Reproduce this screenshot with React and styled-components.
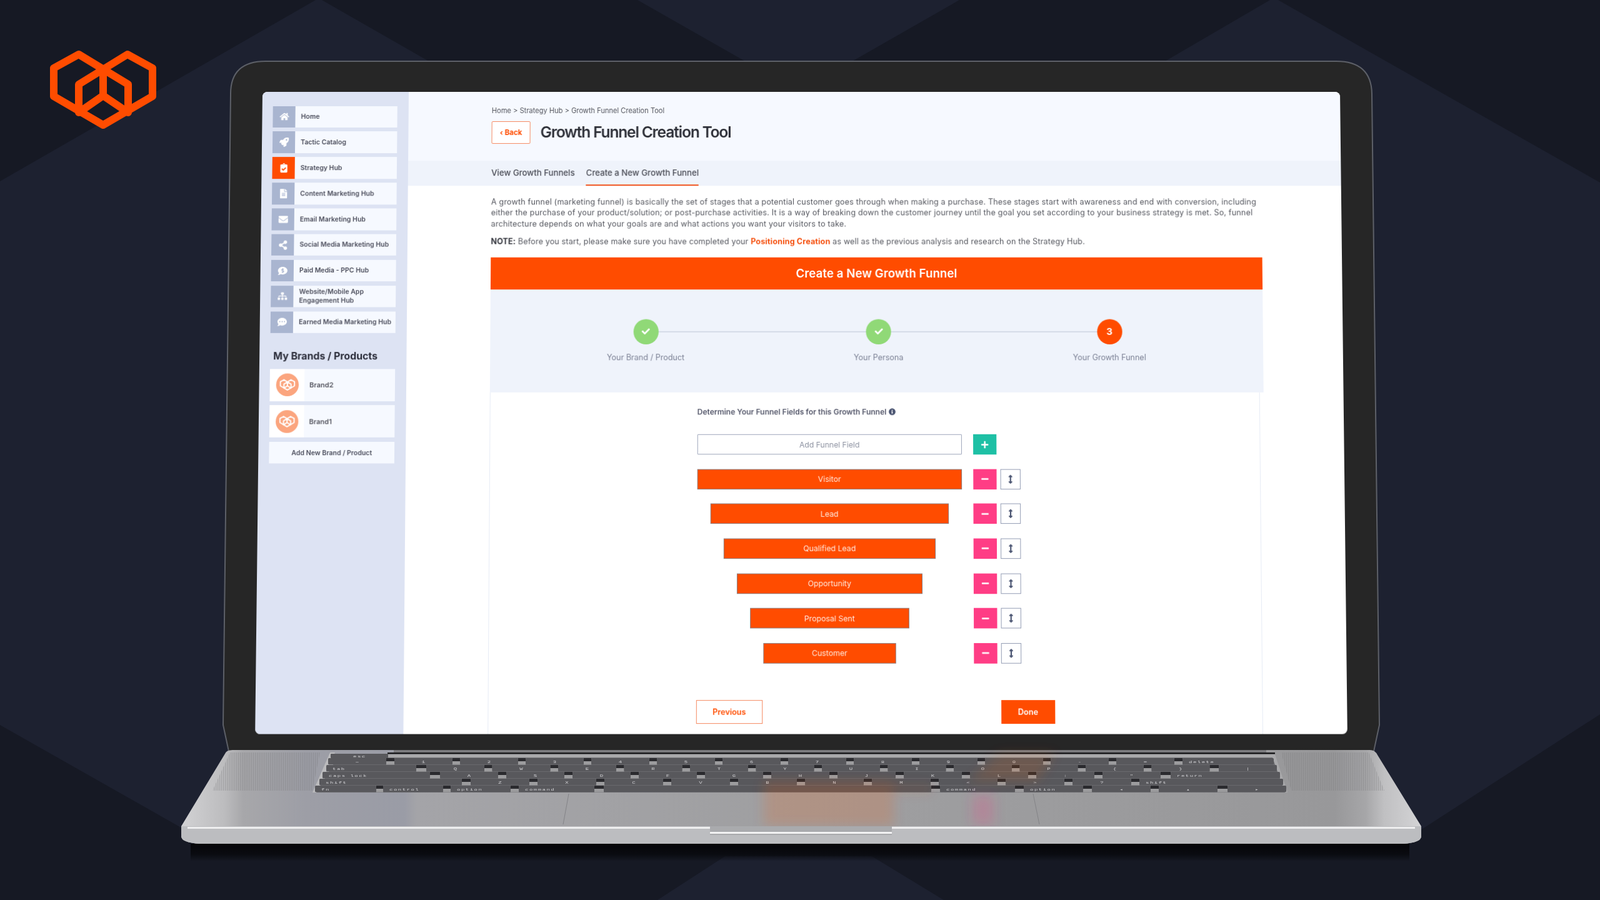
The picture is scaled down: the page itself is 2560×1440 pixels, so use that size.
import React from 'react'
import styled, { createGlobalStyle } from 'styled-components'
import {
  FaHome,
  FaRocket,
  FaClipboardCheck,
  FaFileAlt,
  FaEnvelope,
  FaShareAlt,
  FaCommentDollar,
  FaSitemap,
  FaCommentDots,
  FaInfoCircle,
  FaPlus,
  FaMinus,
  FaCheck,
  FaArrowsAltV
} from 'react-icons/fa'

const ORANGE = '#ff4c00'
const FONT = '"Inter", "Liberation Sans", sans-serif'

const GlobalStyle = createGlobalStyle`
  html, body {
    margin: 0;
    padding: 0;
    background: #1d2130;
    font-family: ${FONT};
  }
  * { box-sizing: border-box; }
`

const Stage = styled.div`
  position: relative;
  width: 2560px;
  height: 1440px;
  overflow: hidden;
  background: #1d2130;
`

const Drawing = styled.svg`
  position: absolute;
  left: 0;
  top: 0;
`

const LogoMark = styled.svg`
  position: absolute;
  left: 70px;
  top: 70px;
`

/* the laptop's display, a window lying on the free canvas of the mockup */
const Screen = styled.div`
  position: absolute;
  left: 420px;
  top: 147px;
  width: 1724px;
  height: 1014px;
  display: flex;
  overflow: hidden;
  background: #fff;
  border-radius: 8px;
  filter: blur(0.3px);
  transform-origin: 50% 0;
  transform: perspective(2000px) rotateX(1.53deg);
`

const Sidebar = styled.aside`
  flex: 0 0 234px;
  padding: 22.5px 0 0 17px;
  background: #dde3f3;
`

const NavList = styled.nav`
  display: flex;
  flex-direction: column;
  gap: 6.4px;
  width: 199px;
`

const NavRow = styled.div`
  display: flex;
  align-items: center;
  height: 34.5px;
  background: #f6f9ff;
  font-size: 10.5px;
  line-height: 14.5px;
  font-weight: 600;
  color: #4c4e5c;
  span:last-child {
    padding-top: 1px;
  }
`

const NavIcon = styled.span`
  flex: 0 0 36px;
  align-self: stretch;
  display: flex;
  align-items: center;
  justify-content: center;
  margin-right: 9px;
  font-size: 15px;
  color: #fff;
  background: ${props => (props.$active ? ORANGE : '#a9b5d0')};
`

const SideHeading = styled.h3`
  margin: 26.5px 0 10px 5px;
  font-size: 15.8px;
  line-height: 20px;
  font-weight: 700;
  color: #2c2e3b;
`

const BrandList = styled.div`
  display: flex;
  flex-direction: column;
  gap: 6px;
  width: 199px;
`

const BrandRow = styled.div`
  display: flex;
  align-items: center;
  height: 51.4px;
  background: #f6f9ff;
  font-size: 11px;
  font-weight: 600;
  color: #55565f;
`

const BrandThumb = styled.span`
  flex: 0 0 55px;
  align-self: stretch;
  display: flex;
  align-items: center;
  justify-content: center;
  margin-right: 8px;
  background: #fff;
`

const BrandCircle = styled.span`
  width: 36px;
  height: 36px;
  display: flex;
  align-items: center;
  justify-content: center;
  border-radius: 50%;
  background: #fba57e;
`

const AddBrand = styled.div`
  display: flex;
  align-items: center;
  justify-content: center;
  width: 199px;
  height: 33.5px;
  margin-top: 7px;
  background: #f6f9ff;
  font-size: 10.5px;
  font-weight: 600;
  color: #4c4e5c;
`

const Main = styled.main`
  flex: 1;
  display: flex;
  flex-direction: column;
  min-width: 0;
`

const PageHeader = styled.header`
  flex: 0 0 110px;
  padding: 22px 0 0 133px;
  background: #f6f9ff;
`

const Breadcrumb = styled.div`
  height: 16px;
  font-size: 11.1px;
  line-height: 16px;
  color: #55575f;
`

const TitleRow = styled.div`
  display: flex;
  align-items: center;
  gap: 16px;
  margin-top: 9px;
`

const BackButton = styled.button`
  width: 62px;
  height: 36px;
  padding: 0;
  border: 1.5px solid #f58a62;
  border-radius: 2px;
  background: #fff;
  font-family: ${FONT};
  font-size: 11.5px;
  font-weight: 700;
  color: ${ORANGE};
`

const PageTitle = styled.h1`
  margin: 0 0 2px;
  font-size: 24.4px;
  line-height: 34px;
  font-weight: 600;
  letter-spacing: -1.1px;
  color: #2e3038;
`

const TabBar = styled.div`
  flex: 0 0 40px;
  display: flex;
  gap: 18px;
  padding-left: 133px;
  background: #eff3fb;
`

const Tab = styled.div`
  display: flex;
  align-items: center;
  font-size: 13.2px;
  font-weight: 500;
  color: #474953;
  border-bottom: 2px solid ${props => (props.$active ? '#f0531e' : 'transparent')};
`

const Content = styled.div`
  flex: 0 0 auto;
  padding: 17px 0 0 133px;
  width: 1363px;
`

const Intro = styled.p`
  margin: 0 0 10.4px;
  font-size: 12.5px;
  line-height: 17.4px;
  letter-spacing: 0.2px;
  color: #55575f;
  white-space: nowrap;
`

const Note = styled(Intro)`
  margin-bottom: 17px;
  letter-spacing: 0.16px;
  strong {
    font-weight: 700;
    color: #34363e;
  }
  b {
    font-weight: 700;
    color: #f5500f;
  }
`

const CardHeading = styled.div`
  display: flex;
  align-items: center;
  justify-content: center;
  height: 50.7px;
  background: ${ORANGE};
  font-size: 18.5px;
  letter-spacing: 0.1px;
  font-weight: 600;
  color: #fff;
`

const StepBand = styled.div`
  position: relative;
  display: grid;
  grid-template-columns: 371px 370px 365px;
  height: 163px;
  padding: 47px 0 0 62px;
  background: #eff3fb;
  &::before {
    content: '';
    position: absolute;
    left: 247px;
    top: 66px;
    width: 738px;
    height: 2px;
    background: #d5dbe8;
  }
`

const Step = styled.div`
  position: relative;
  display: flex;
  flex-direction: column;
  align-items: center;
  gap: 13.5px;
  font-size: 12.5px;
  line-height: 16px;
  color: #7b8094;
`

const StepCircle = styled.span`
  width: 40px;
  height: 40px;
  display: flex;
  align-items: center;
  justify-content: center;
  border-radius: 50%;
  background: ${props => (props.$current ? ORANGE : '#90d977')};
  color: #fff;
  font-size: ${props => (props.$current ? '15px' : '13px')};
  font-weight: 700;
`

const FormCard = styled.div`
  height: 540px;
  margin-right: 6px;
  padding: 22.5px 0 0 328.8px;
  border-left: 1px solid #e6ebf5;
  border-right: 1px solid #e6ebf5;
`

const FormHeading = styled.div`
  display: flex;
  align-items: center;
  gap: 4px;
  height: 16px;
  margin-bottom: 28px;
  font-size: 12px;
  font-weight: 600;
  color: #55586b;
  svg {
    color: #4b5572;
    font-size: 11px;
  }
`

const FieldRow = styled.div`
  display: flex;
  align-items: center;
  height: 32px;
  margin-bottom: 22.6px;
`

const BarSlot = styled.div`
  flex: 0 0 420px;
  display: flex;
  justify-content: center;
  margin-right: 18.5px;
`

const FieldInput = styled.div`
  width: 100%;
  height: 32px;
  display: flex;
  align-items: center;
  justify-content: center;
  border: 1.5px solid #9ea6bb;
  border-radius: 1px;
  background: #fff;
  font-size: 12.1px;
  color: #8d92a1;
`

const FunnelBar = styled.div`
  height: 32px;
  display: flex;
  align-items: center;
  justify-content: center;
  border: 1px solid #8d7d7e;
  background: ${ORANGE};
  font-size: 12.2px;
  color: #ffe9df;
`

const IconButton = styled.button`
  width: 37px;
  height: 32px;
  padding: 0;
  display: flex;
  align-items: center;
  justify-content: center;
  border: 0;
  background: ${props => (props.$add ? '#1ec0a5' : '#ff3d85')};
  color: #fff;
  font-size: 13px;
`

const DragButton = styled.button`
  width: 32px;
  height: 32px;
  margin-left: 6px;
  padding: 0;
  display: flex;
  align-items: center;
  justify-content: center;
  border: 1.5px solid #959eb5;
  background: #fff;
  color: #4b5572;
  font-size: 14px;
`

const ButtonRow = styled.div`
  display: flex;
  justify-content: space-between;
  width: 567.2px;
  margin: 57.5px 0 0 -1.3px;
`

const PrevButton = styled.button`
  width: 105.6px;
  height: 37px;
  padding: 0;
  border: 1.5px solid #f58a62;
  background: #fff;
  font-family: ${FONT};
  font-size: 12.5px;
  font-weight: 600;
  color: ${ORANGE};
`

const DoneButton = styled(PrevButton)`
  width: 85px;
  border: 0;
  background: ${ORANGE};
  color: #fff;
`

const navItems = [
  { icon: FaHome, label: 'Home' },
  { icon: FaRocket, label: 'Tactic Catalog' },
  { icon: FaClipboardCheck, label: 'Strategy Hub', active: true },
  { icon: FaFileAlt, label: 'Content Marketing Hub' },
  { icon: FaEnvelope, label: 'Email Marketing Hub' },
  { icon: FaShareAlt, label: 'Social Media Marketing Hub' },
  { icon: FaCommentDollar, label: 'Paid Media - PPC Hub' },
  { icon: FaSitemap, label: ['Website/Mobile App', <br key="br" />, 'Engagement Hub'] },
  { icon: FaCommentDots, label: 'Earned Media Marketing Hub' }
]

const funnelFields = ['Visitor', 'Lead', 'Qualified Lead', 'Opportunity', 'Proposal Sent', 'Customer']

const LOGO_LINES =
  'M126 87 L86 109 V154 L165 200 L244 154 V109 L204 87 L126 135 V180 L165 153 L205 180 V135 L126 87 M165 112 V153'

const LogoPath = props => (
  <path d={LOGO_LINES} fill="none" strokeLinejoin="round" strokeLinecap="round" {...props} />
)

// key rows of the keyboard: [left, right, label]
const rows = [
  { y: 1213, keys: [[525, 618, '~']].concat(
    ['1', '2', '3', '4', '5', '6', '7', '8', '9', '0', '-', '='].map((l, i) => [631 + 105 * i, 724 + 105 * i, l]),
    [[1892, 2038, 'delete']]
  ) },
  { y: 1224, keys: [[522, 666, 'tab']].concat(
    ['Q', 'W', 'E', 'R', 'T', 'Y', 'U', 'I', 'O', 'P', '{', '}'].map((l, i) => [682 + 105.5 * i, 775 + 105.5 * i, l]),
    [[1950, 2043, '|']]
  ) },
  { y: 1235, keys: [[516, 688, 'caps lock']].concat(
    ['A', 'S', 'D', 'F', 'G', 'H', 'J', 'K', 'L', ':', '"'].map((l, i) => [704 + 106 * i, 797 + 106 * i, l]),
    [[1873, 2048, 'return']]
  ) },
  { y: 1246, keys: [[511, 739, 'shift']].concat(
    ['Z', 'X', 'C', 'V', 'B', 'N', 'M', '<', '>', '?'].map((l, i) => [753 + 107 * i, 847 + 107 * i, l]),
    [[1823, 2053, 'shift']]
  ) },
  { y: 1257, keys: [
    [504, 602, 'fn'],
    [613, 709, 'control'],
    [721, 817, 'option'],
    [830, 951, 'command'],
    [966, 1490, ''],
    [1504, 1624, 'command'],
    [1638, 1733, 'option'],
    [1747, 1841, '◂'],
    [1854, 1948, '▴'],
    [1964, 2058, '▸']
  ] }
]

const KeyRow = ({ y, keys }) => (
  <g>
    {keys.map(([x1, x2, label], i) => {
      const next = keys[i + 1]
      const wordKey = label.length > 1
      return (
        <g key={i}>
          {next && <rect x={x2} y={y} width={next[0] - x2} height={5} fill="#2c2c2f" />}
          {next && <rect x={x2} y={y + 5} width={next[0] - x2} height={5.5} fill="#9c9c9e" />}
          <rect x={x1} y={y} width={x2 - x1} height={10.2} rx={1.5} fill="#58585c" />
          <text
            transform={`translate(${wordKey ? x1 + 10 : (x1 + x2) / 2} ${y + 8}) scale(1 .62)`}
            textAnchor={wordKey ? 'start' : 'middle'}
            fontFamily="Liberation Mono, monospace"
            fontSize={9}
            letterSpacing={wordKey ? 1.5 : 0}
            fill="#cfcfd2"
          >
            {label}
          </text>
        </g>
      )
    })}
  </g>
)

const Backdrop = () => (
  <Drawing width="2560" height="1440" viewBox="0 0 2560 1440">
    <defs>
      <linearGradient id="deck" x1="290" x2="2274" y1="0" y2="0" gradientUnits="userSpaceOnUse">
        <stop offset="0" stopColor="#d2d2d4" />
        <stop offset=".035" stopColor="#bcbcbe" />
        <stop offset=".05" stopColor="#a7a7aa" />
        <stop offset=".1" stopColor="#9d9ea6" />
        <stop offset=".18" stopColor="#9a9ca6" />
        <stop offset=".19" stopColor="#a4a4a8" />
        <stop offset=".5" stopColor="#9f9fa1" />
        <stop offset=".93" stopColor="#98989a" />
        <stop offset=".955" stopColor="#a6a6a8" />
        <stop offset=".97" stopColor="#c0c0c2" />
        <stop offset="1" stopColor="#d4d4d6" />
      </linearGradient>
      <linearGradient id="underShadow" x1="0" x2="0" y1="0" y2="1">
        <stop offset="0" stopColor="#050508" />
        <stop offset=".6" stopColor="#07080c" stopOpacity=".8" />
        <stop offset="1" stopColor="#07080c" stopOpacity="0" />
      </linearGradient>
      <pattern id="grill" width="3" height="4" patternUnits="userSpaceOnUse">
        <rect width="1.4" height="4" fill="#77777a" fillOpacity=".38" />
      </pattern>
      <filter id="soft" x="-30%" y="-30%" width="160%" height="160%">
        <feGaussianBlur stdDeviation="9" />
      </filter>
      <filter id="keySoft" x="-1%" y="-5%" width="102%" height="110%">
        <feGaussianBlur stdDeviation="0.5" />
      </filter>
    </defs>

    <g fill="#161924">
      <polygon points="0,0 505,0 0,290" />
      <polygon points="515,0 1020,0 1278,147 772,147" />
      <polygon points="1535,0 2032,0 1780,147 1278,147" />
      <polygon points="2045,0 2560,0 2560,292" />
      <polygon points="0,1160 300,1330 2270,1330 2560,1143 2560,1440 1510,1440 1395,1370 1160,1370 1052,1440 0,1440" />
    </g>

    <path
      d="M357 1160 L369 150 Q369 98 425 98 H2138 Q2194 98 2195 150 L2207 1160 L2198 1202 H366 Z"
      fill="#262626"
      stroke="#5d6068"
      strokeWidth="2"
    />

    <rect x="305" y="1350" width="1950" height="28" fill="url(#underShadow)" />
    <path
      d="M360 1206 Q362 1200 372 1200 H2192 Q2200 1200 2204 1208 L2274 1322 V1338 Q2274 1348 2245 1350 H320 Q290 1348 290 1338 V1322 Z"
      fill="url(#deck)"
    />

    {/* speaker grills */}
    <polygon points="368,1204 512,1204 500,1265 340,1265" fill="url(#grill)" />
    <polygon points="2050,1204 2190,1204 2215,1265 2066,1265" fill="url(#grill)" />

    {/* hinge and keyboard well */}
    <rect x="630" y="1200" width="1396" height="4" fill="#7a7a7d" />
    <rect x="620" y="1204" width="1420" height="2.5" fill="#19191b" />
    <polygon points="536,1207 2040,1207 2060,1268 502,1268" fill="#a9a9ab" />
    <polygon points="528,1204 536,1204 506,1268 500,1268" fill="#bbbbbd" />
    <polygon points="540,1212 2036,1212 2056,1268 506,1268" fill="#6f6f73" />

    <g filter="url(#keySoft)">
      <rect x="529" y="1206" width="92" height="7" rx="1" fill="#59595c" />
      <text transform="translate(565 1212) scale(1 .6)" fontFamily="Liberation Mono, monospace" fontSize="9" letterSpacing="1.5" fill="#cfcfd2">esc</text>
      {rows.map(row => (
        <KeyRow key={row.y} {...row} />
      ))}
    </g>

    {/* trackpad edges */}
    <path d="M910 1270 L901 1319 M1653 1270 L1663 1319" fill="none" stroke="#838387" strokeWidth="1" />

    {/* screen reflected in the deck */}
    <g filter="url(#soft)">
      <rect x="1222" y="1250" width="208" height="72" fill="#ff5a10" fillOpacity=".17" />
      <rect x="1430" y="1257" width="60" height="10" fill="#ff5a10" fillOpacity=".12" />
      <polygon points="1600,1205 1688,1205 1660,1250 1550,1250" fill="#ff5a10" fillOpacity=".13" />
      <rect x="1556" y="1272" width="34" height="48" fill="#ff3d85" fillOpacity=".2" />
    </g>

    {/* front lip and notch */}
    <path d="M290 1322 H2274 V1338 Q2274 1348 2245 1350 H320 Q290 1348 290 1338 Z" fill="#bcbdc0" />
    <rect x="300" y="1323" width="1964" height="3" fill="#eeeeef" />
    <rect x="1136" y="1322" width="291" height="14" fill="#a9aaad" />
    <rect x="1136" y="1331" width="291" height="3" fill="#f2f2f3" />
  </Drawing>
)

const Logo = () => (
  <LogoMark width="190" height="150" viewBox="70 70 190 150">
    <LogoPath stroke={ORANGE} strokeWidth="12" />
  </LogoMark>
)

const BrandLogo = () => (
  <svg width="26" height="22" viewBox="74 75 182 136">
    <LogoPath stroke="#fff" strokeWidth="13" />
  </svg>
)

const App = () => (
  <Stage>
    <GlobalStyle />
    <Backdrop />
    <Logo />
    <Screen>
      <Sidebar>
        <NavList>
          {navItems.map((item, i) => (
            <NavRow key={i}>
              <NavIcon $active={item.active}>
                <item.icon />
              </NavIcon>
              <span>{item.label}</span>
            </NavRow>
          ))}
        </NavList>
        <SideHeading>My Brands / Products</SideHeading>
        <BrandList>
          {['Brand2', 'Brand1'].map(name => (
            <BrandRow key={name}>
              <BrandThumb>
                <BrandCircle>
                  <BrandLogo />
                </BrandCircle>
              </BrandThumb>
              {name}
            </BrandRow>
          ))}
        </BrandList>
        <AddBrand>Add New Brand / Product</AddBrand>
      </Sidebar>
      <Main>
        <PageHeader>
          <Breadcrumb>Home &gt; Strategy Hub &gt; Growth Funnel Creation Tool</Breadcrumb>
          <TitleRow>
            <BackButton>‹ Back</BackButton>
            <PageTitle>Growth Funnel Creation Tool</PageTitle>
          </TitleRow>
        </PageHeader>
        <TabBar>
          <Tab>View Growth Funnels</Tab>
          <Tab $active>Create a New Growth Funnel</Tab>
        </TabBar>
        <Content>
          <Intro>
            A growth funnel (marketing funnel) is basically the set of stages that a potential customer goes through when making a purchase. These stages start with awareness and end with conversion, including
            <br />
            either the purchase of your product/solution; or post-purchase activities. It is a way of breaking down the customer journey until the goal you set according to your business strategy is met. So, funnel
            <br />
            architecture depends on what your goals are and what actions you want your visitors to take.
          </Intro>
          <Note>
            <strong>NOTE:</strong> Before you start, please make sure you have completed your <b>Positioning Creation</b> as well as the previous analysis and research on the Strategy Hub.
          </Note>
          <CardHeading>Create a New Growth Funnel</CardHeading>
          <StepBand>
            <Step>
              <StepCircle><FaCheck /></StepCircle>
              Your Brand / Product
            </Step>
            <Step>
              <StepCircle><FaCheck /></StepCircle>
              Your Persona
            </Step>
            <Step>
              <StepCircle $current>3</StepCircle>
              Your Growth Funnel
            </Step>
          </StepBand>
          <FormCard>
            <FormHeading>
              Determine Your Funnel Fields for this Growth Funnel
              <FaInfoCircle />
            </FormHeading>
            <FieldRow>
              <BarSlot>
                <FieldInput>Add Funnel Field</FieldInput>
              </BarSlot>
              <IconButton $add><FaPlus /></IconButton>
            </FieldRow>
            {funnelFields.map((field, i) => (
              <FieldRow key={field}>
                <BarSlot>
                  <FunnelBar style={{ width: 420 - i * 42 }}>{field}</FunnelBar>
                </BarSlot>
                <IconButton><FaMinus /></IconButton>
                <DragButton><FaArrowsAltV /></DragButton>
              </FieldRow>
            ))}
            <ButtonRow>
              <PrevButton>Previous</PrevButton>
              <DoneButton>Done</DoneButton>
            </ButtonRow>
          </FormCard>
        </Content>
      </Main>
    </Screen>
  </Stage>
)

export default App
